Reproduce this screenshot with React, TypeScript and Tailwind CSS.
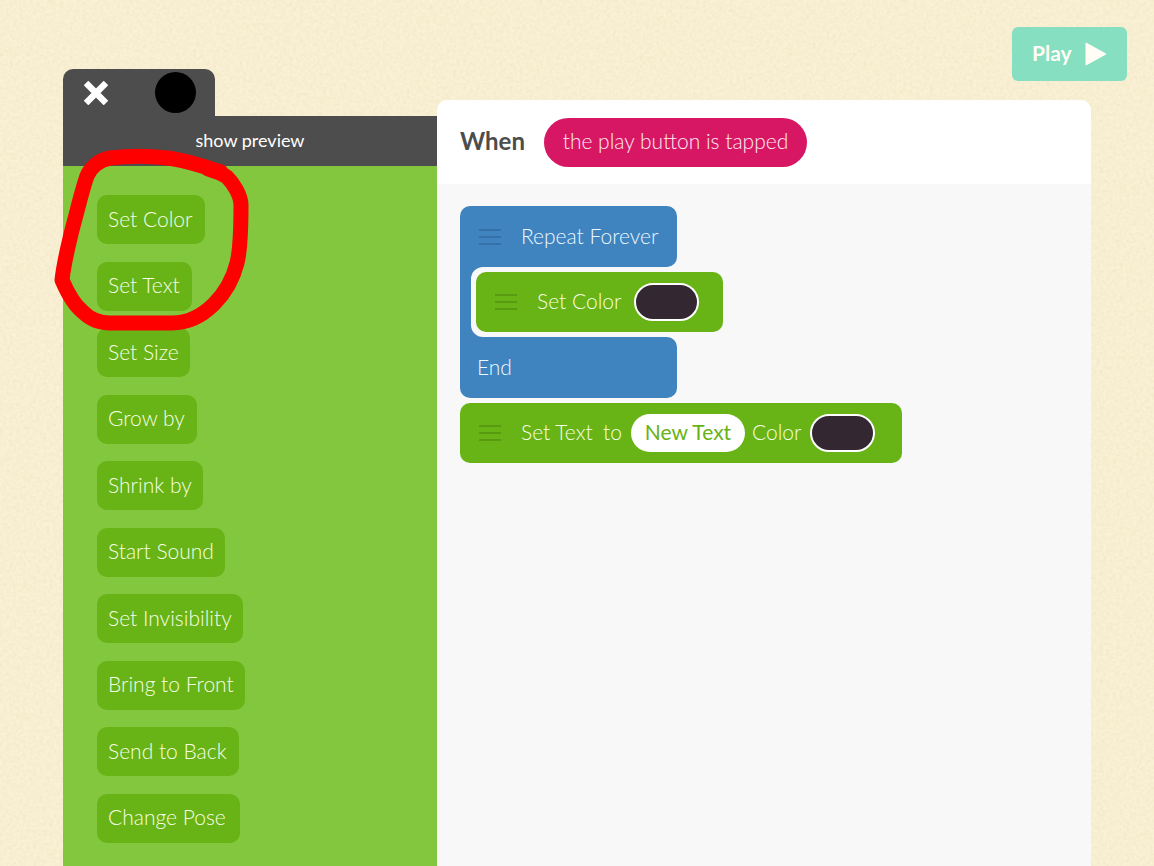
import React from "react";

const blocks = [
  { label: "Set Color", width: "min-w-[108px]" },
  { label: "Set Text", width: "min-w-[95px]" },
  { label: "Set Size", width: "min-w-[93px]" },
  { label: "Grow by", width: "min-w-[100px]" },
  { label: "Shrink by", width: "min-w-[106px]" },
  { label: "Start Sound", width: "min-w-[128px]" },
  { label: "Set Invisibility", width: "min-w-[146px]" },
  { label: "Bring to Front", width: "min-w-[148px]" },
  { label: "Send to Back", width: "min-w-[142px]" },
  { label: "Change Pose", width: "min-w-[143px]" },
];

function PaperTexture() {
  return (
    <svg className="absolute inset-0 h-full w-full" aria-hidden="true">
      <filter id="grain" x="0" y="0" width="100%" height="100%">
        <feTurbulence type="fractalNoise" baseFrequency="0.3" numOctaves="3" seed="4" />
        <feColorMatrix values="0 0 0 0 0.72  0 0 0 0 0.6  0 0 0 0 0.3  0.6 0.6 0 0 -0.5" />
      </filter>
      <rect width="100%" height="100%" filter="url(#grain)" opacity="0.5" />
    </svg>
  );
}

function Handle({ color }: { color: string }) {
  return (
    <svg className={`h-[18px] w-[22px] shrink-0 ${color}`} viewBox="0 0 22 18" aria-hidden="true">
      <path d="M0 2h22M0 9h22M0 16h22" stroke="currentColor" strokeWidth="2" />
    </svg>
  );
}

function ColorSwatch() {
  return (
    <button
      type="button"
      aria-label="Pick color"
      className="h-[38px] w-[65px] shrink-0 rounded-full border-2 border-white bg-[#332831]"
    />
  );
}

function Annotation() {
  return (
    <svg
      className="pointer-events-none absolute top-[140px] left-[50px] h-[200px] w-[210px]"
      viewBox="50 140 210 200"
      fill="none"
      aria-hidden="true"
    >
      <path
        d="M221 172C205 167 186 160 167 158C150 156 128 156 110 158C99 160 90 168 87 176C82 190 77 212 72 230C68 247 64 262 62 280C68 294 74 305 83 312C91 320 99 323 110 323H172C190 323 203 315 214 304C225 293 233 279 237 263C241 247 241 222 241 205C241 195 233 183 227 177C222 173 214 171 208 169"
        stroke="#ff0000"
        strokeWidth="15"
        strokeLinecap="round"
        strokeLinejoin="round"
      />
    </svg>
  );
}

export default function App() {
  return (
    <div className="relative min-h-screen overflow-hidden bg-[#f9f0d5] font-['Lato',sans-serif] text-[21px] leading-6">
      <PaperTexture />
      <div className="relative flex min-h-screen pl-[63px]">
        <aside className="flex w-[374px] shrink-0 flex-col pt-[69px]">
          <div className="flex h-[47px] w-[152px] items-center justify-between rounded-t-[10px] bg-[#4d4d4d] pr-[19px] pl-[21px]">
            <button type="button" aria-label="Close">
              <svg className="h-6 w-6" viewBox="0 0 24 24" aria-hidden="true">
                <path d="M2 2L22 22M22 2L2 22" stroke="#fff" strokeWidth="6.5" />
              </svg>
            </button>
            <button type="button" aria-label="Object" className="h-[41px] w-[41px] rounded-full bg-black" />
          </div>
          <button type="button" className="h-[50px] shrink-0 bg-[#4d4d4d] pb-0.5 text-[18px] text-white">
            show preview
          </button>
          <div className="flex-1 bg-[#83c73e] px-[34px] pt-[29px] pb-[23px]">
            <ul className="flex h-[648px] flex-col items-start justify-between">
              {blocks.map((b) => (
                <li key={b.label}>
                  <button
                    type="button"
                    className={`block h-[49px] rounded-[10px] bg-[#68b315] px-[11px] pb-0.5 text-left font-light text-[#f6ffe4] ${b.width}`}
                  >
                    {b.label}
                  </button>
                </li>
              ))}
            </ul>
          </div>
        </aside>

        <div className="flex flex-1 flex-col">
          <header className="flex h-[100px] shrink-0 items-start justify-end pt-[27px] pr-[27px]">
            <button
              type="button"
              className="flex h-[54px] w-[115px] items-center justify-between rounded-md bg-[#86dfc0] px-5 text-[21px] font-bold text-[#fffdf5]"
            >
              <span className="pb-0.5">Play</span>
              <svg className="h-6 w-[22px]" viewBox="0 0 22 24" aria-hidden="true">
                <path d="M1 1L21 12L1 23Z" fill="#fffdf5" stroke="#fffdf5" strokeLinejoin="round" />
              </svg>
            </button>
          </header>

          <main className="mr-[63px] flex flex-1 flex-col overflow-hidden rounded-t-[10px] bg-[#f8f8f8]">
            <div className="flex h-[84px] shrink-0 items-center gap-[18px] bg-white px-[23px]">
              <h1 className="w-[66px] pb-0.5 text-[24px] font-bold text-[#4d4d4d]">When</h1>
              <button
                type="button"
                className="h-[49px] w-[263px] rounded-full bg-[#d71763] pb-0.5 font-light text-[#ffeaf4]"
              >
                the play button is tapped
              </button>
            </div>

            <div className="flex flex-col items-start gap-[5px] px-[23px] pt-[22px] font-light">
              <section>
                <div className="flex h-[61px] w-[217px] items-center gap-5 rounded-t-[10px] rounded-br-[10px] bg-[#3f83bf] pl-[19px] text-[#ecf8ff]">
                  <Handle color="text-[#3371a8]" />
                  <span className="pb-0.5">Repeat Forever</span>
                </div>
                <div className="w-[30px] bg-[#3f83bf] pl-[11px]">
                  <div className="w-max rounded-l-[12px] bg-[#f8f8f8] p-[5px]">
                    <div className="flex h-[60px] w-[247px] items-center rounded-[10px] bg-[#68b315] pl-[19px] text-[#f6ffe4]">
                      <Handle color="text-[#589a10]" />
                      <span className="ml-5 w-[97px] pb-0.5">Set Color</span>
                      <ColorSwatch />
                    </div>
                  </div>
                </div>
                <div className="flex h-[61px] w-[217px] items-center rounded-b-[10px] rounded-tr-[10px] bg-[#3f83bf] px-[17px] text-[#ecf8ff]">
                  <span className="pb-0.5">End</span>
                </div>
              </section>

              <section className="flex h-[60px] w-[442px] items-center rounded-[10px] bg-[#68b315] pl-[19px] text-[#f6ffe4]">
                <Handle color="text-[#589a10]" />
                <span className="ml-5 w-[82px] pb-0.5">Set Text</span>
                <span className="w-[28px] pb-0.5">to</span>
                <button
                  type="button"
                  className="h-[38px] w-[114px] rounded-full bg-white pb-0.5 text-[21px] font-normal text-[#68b315]"
                >
                  New Text
                </button>
                <span className="ml-[7px] w-[58px] pb-0.5">Color</span>
                <ColorSwatch />
              </section>
            </div>
          </main>
        </div>
      </div>
      <Annotation />
    </div>
  );
}
